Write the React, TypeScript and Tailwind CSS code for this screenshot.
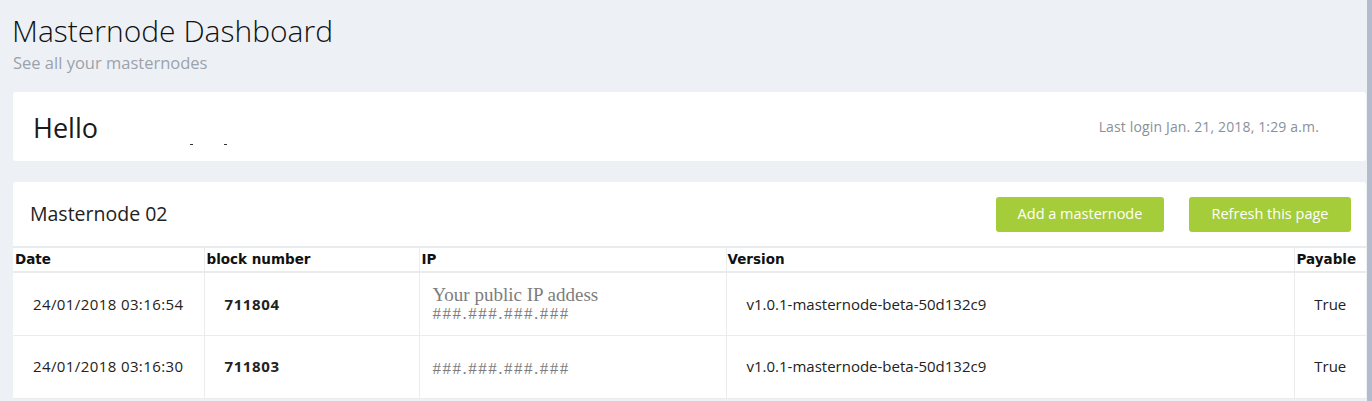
const rows = [
  {
    date: '24/01/2018 03:16:54',
    block: '711804',
    ipLabel: 'Your public IP addess',
    ip: '###.###.###.###',
    version: 'v1.0.1-masternode-beta-50d132c9',
    payable: 'True',
  },
  {
    date: '24/01/2018 03:16:30',
    block: '711803',
    ipLabel: null,
    ip: '###.###.###.###',
    version: 'v1.0.1-masternode-beta-50d132c9',
    payable: 'True',
  },
];

const sans = "font-['Open_Sans','Liberation_Sans',sans-serif]";

export default function App() {
  return (
    <div className={`flex min-h-[401px] bg-[#edf1f6] ${sans}`}>
      <div className="flex-1 pl-[13px] pr-[1px]">
        <div className="pt-[11px]">
          <h1 className="-ml-[1px] text-[30px] font-light leading-[40px] text-[#111]">
            Masternode Dashboard
          </h1>
          <p className="mt-[1px] text-[16.5px] leading-[21px] text-[#9ca2aa]">
            See all your masternodes
          </p>
        </div>

        <div className="mt-[19px] flex h-[69px] items-start justify-between rounded-[3px] bg-white">
          <div className="relative pl-[20px] pt-[17px]">
            <span className="text-[27px] leading-[37px] text-[#1a1a1a]">Hello</span>
            <span className="absolute left-[177px] top-[52px] h-[1px] w-[3px] bg-[#333]" />
            <span className="absolute left-[211px] top-[52px] h-[1px] w-[3px] bg-[#333]" />
          </div>
          <div className="pr-[47px] pt-[25px] text-[14px] leading-[19px] tracking-[0.15px] text-[#8a9099]">
            Last login Jan. 21, 2018, 1:29 a.m.
          </div>
        </div>

        <div className="mt-[21px] rounded-t-[3px] bg-white">
          <div className="flex h-[64px] items-center justify-between pl-[17px] pr-[15px]">
            <h2 className="text-[19.5px] leading-[26px] text-[#222]">Masternode 02</h2>
            <div className="flex gap-[25px]">
              <button className="h-[35px] w-[168px] rounded-[3px] bg-[#a5cd39] text-[14.5px] text-white">
                Add a masternode
              </button>
              <button className="h-[35px] w-[162px] rounded-[3px] bg-[#a5cd39] text-[14.5px] text-white">
                Refresh this page
              </button>
            </div>
          </div>

          <table className="w-full table-fixed border-collapse border-t-2 border-[#e9ecef]">
            <colgroup>
              <col className="w-[191px]" />
              <col className="w-[215px]" />
              <col className="w-[307px]" />
              <col className="w-[568px]" />
              <col />
            </colgroup>
            <thead>
              <tr className="h-[25px] border-b-2 border-[#e9ecef] text-left font-['DejaVu_Sans',sans-serif] text-[13.5px] font-bold text-[#111]">
                <th className="pl-[2px] font-bold">Date</th>
                <th className="border-l border-[#ececec] pl-[2px] font-bold">block number</th>
                <th className="border-l border-[#ececec] pl-[2px] font-bold">IP</th>
                <th className="border-l border-[#ececec] pl-[1px] font-bold">Version</th>
                <th className="border-l border-[#ececec] pl-[2px] font-bold">Payable</th>
              </tr>
            </thead>
            <tbody>
              {rows.map((row) => (
                <tr key={row.block} className="h-[63px] border-b border-[#ececec] text-[15px] text-[#222]">
                  <td className="pl-[20px] tracking-[0.4px]">{row.date}</td>
                  <td className="border-l border-[#ececec] pl-[20px] font-bold tracking-[0.6px]">{row.block}</td>
                  <td className="border-l border-[#ececec] pl-[13px] font-['Liberation_Serif',serif] text-[#7d7d7d]">
                    {row.ipLabel && <div className="text-[19px] leading-[20px]">{row.ipLabel}</div>}
                    <div className={`${row.ipLabel ? '' : 'pt-[4px]'} text-[17px] leading-[18px] tracking-[1.5px]`}>{row.ip}</div>
                  </td>
                  <td className="border-l border-[#ececec] pl-[20px]">{row.version}</td>
                  <td className="border-l border-[#ececec] text-center">{row.payable}</td>
                </tr>
              ))}
            </tbody>
          </table>
        </div>
      </div>
      <div className="w-[5px] bg-[#b3bccb]" />
    </div>
  );
}
